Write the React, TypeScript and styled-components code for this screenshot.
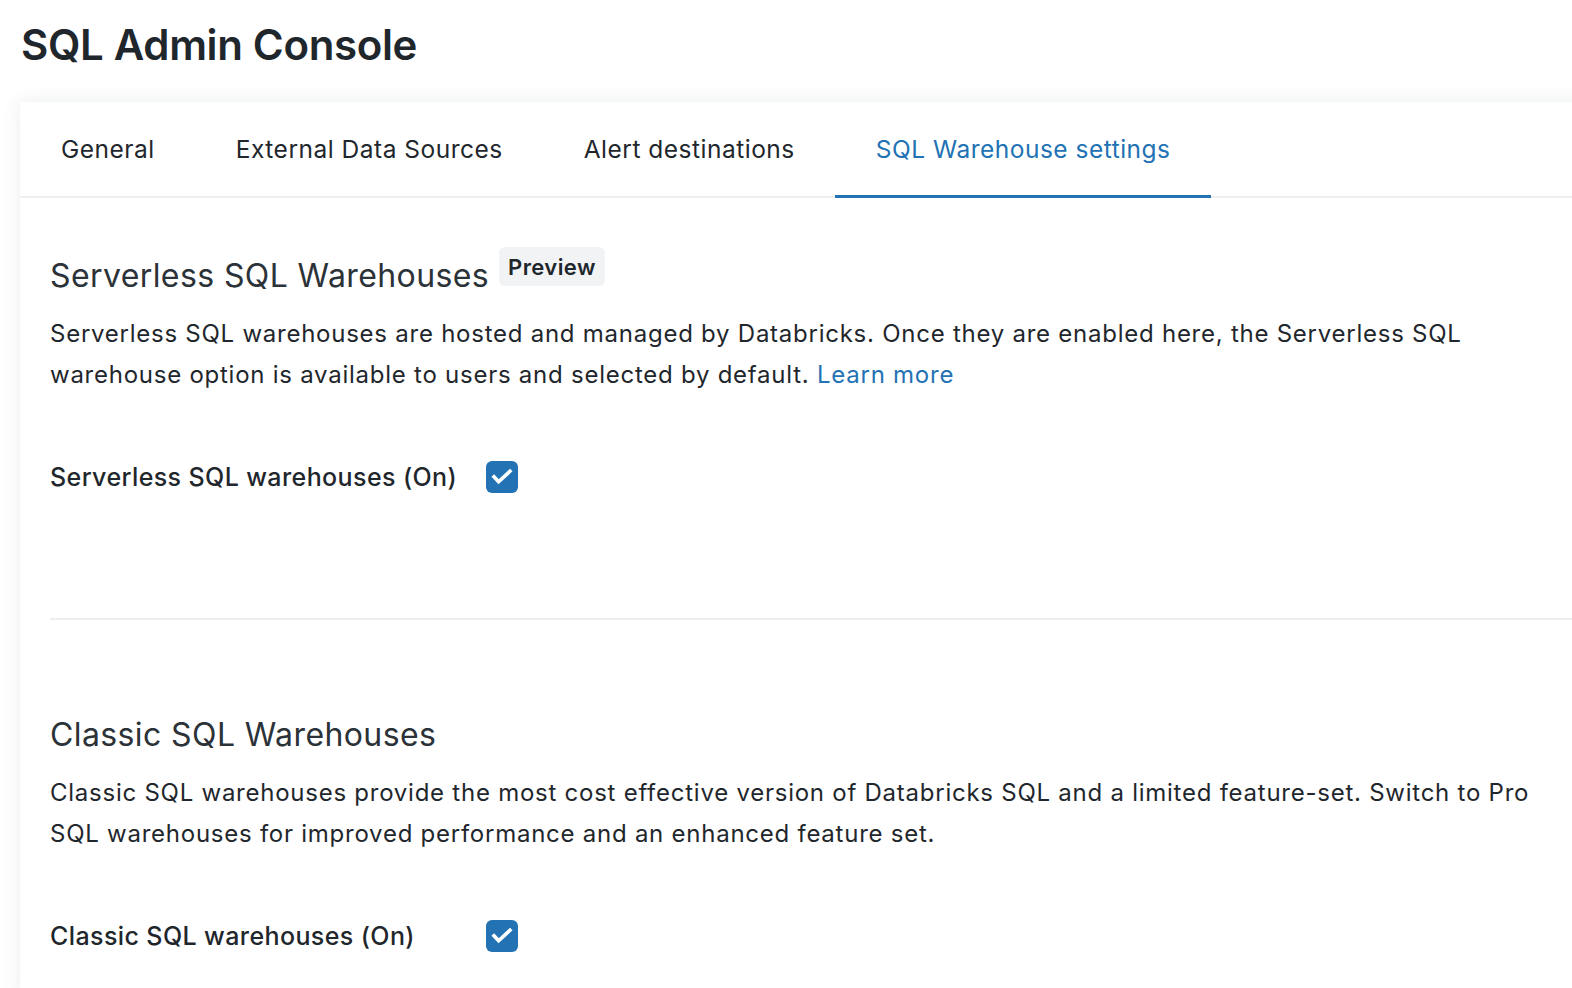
import React from "react";
import styled, { createGlobalStyle } from "styled-components";

const GlobalStyle = createGlobalStyle`
  html, body { margin: 0; padding: 0; background: #ffffff; overflow: hidden; }
  body { font-family: Inter, "Noto Sans", "Liberation Sans", sans-serif; color: #1f272d; }
  * { box-sizing: border-box; }
`;

const Page = styled.div`
  width: 1572px;
  height: 988px;
  padding: 0 0 0 20px;
  overflow: hidden;
`;

const Title = styled.h1`
  margin: 0;
  height: 102px;
  display: flex;
  align-items: center;
  padding: 0 0 14px 1px;
  font-size: 42px;
  font-weight: 600;
  letter-spacing: -0.35px;
  color: #1f272d;
`;

const Card = styled.div`
  width: 1590px;
  min-height: 900px;
  background: #ffffff;
  box-shadow: 0 0 18px rgba(30, 50, 70, 0.09);
`;

const TabBar = styled.div`
  display: flex;
  height: 96px;
  border-bottom: 2px solid #edeff1;
`;

const Tab = styled.div<{ $active?: boolean }>`
  display: flex;
  align-items: center;
  padding: 0 40px 0 41px;
  margin-bottom: -2px;
  font-size: 24.5px;
  letter-spacing: 0.5px;
  font-weight: 400;
  color: ${(p) => (p.$active ? "#2272b4" : "#1f272d")};
  border-bottom: 3px solid ${(p) => (p.$active ? "#2272b4" : "transparent")};
`;

const Section = styled.section<{ $top: number; $bottom: number }>`
  padding: ${(p) => p.$top}px 40px ${(p) => p.$bottom}px 30px;
`;

const HeadingRow = styled.div`
  display: flex;
  align-items: flex-start;
  gap: 10px;
`;

const Heading = styled.h2`
  margin: 0;
  font-size: 32px;
  line-height: 40px;
  letter-spacing: 0.4px;
  font-weight: 400;
  color: #2b3238;
`;

const Badge = styled.span`
  margin-top: -9px;
  height: 39px;
  padding: 0 9px;
  display: inline-flex;
  align-items: center;
  border-radius: 6px;
  background: #f1f3f5;
  font-size: 22px;
  letter-spacing: 0.4px;
  font-weight: 600;
  color: #1f272d;
`;

const Paragraph = styled.p`
  margin: 17px 0 0;
  font-size: 24px;
  line-height: 41px;
  letter-spacing: 0.75px;
  color: #1f272d;
  max-width: 1510px;
`;

const Link = styled.a`
  color: #2272b4;
  text-decoration: none;
`;

const ToggleRow = styled.label`
  margin-top: 66px;
  display: grid;
  grid-template-columns: 436px 32px;
  align-items: center;
  height: 32px;
  font-size: 25px;
  letter-spacing: 0.4px;
  font-weight: 500;
  color: #1f272d;
`;

const CheckBox = styled.span`
  width: 32px;
  height: 32px;
  border-radius: 6px;
  background: #2272b4;
  display: inline-flex;
  align-items: center;
  justify-content: center;
`;

const Divider = styled.hr`
  margin: 0 0 0 30px;
  border: none;
  height: 2px;
  background: #eceeef;
`;

const Check = () => (
  <CheckBox>
    <svg width="32" height="32" viewBox="0 0 32 32">
      <path
        d="M8 15.8 L12.6 20.8 L24 10.2"
        fill="none"
        stroke="#ffffff"
        strokeWidth="3.6"
        strokeLinecap="square"
      />
    </svg>
  </CheckBox>
);

export default function App() {
  return (
    <Page>
      <GlobalStyle />
      <Title>SQL Admin Console</Title>
      <Card>
        <TabBar>
          <Tab>General</Tab>
          <Tab>External Data Sources</Tab>
          <Tab>Alert destinations</Tab>
          <Tab $active>SQL Warehouse settings</Tab>
        </TabBar>
        <Section $top={58} $bottom={125}>
          <HeadingRow>
            <Heading>Serverless SQL Warehouses</Heading>
            <Badge>Preview</Badge>
          </HeadingRow>
          <Paragraph>
            Serverless SQL warehouses are hosted and managed by Databricks. Once they are enabled here, the
            Serverless SQL warehouse option is available to users and selected by default.{" "}
            <Link href="#">Learn more</Link>
          </Paragraph>
          <ToggleRow>
            <span>Serverless SQL warehouses (On)</span>
            <Check />
          </ToggleRow>
        </Section>
        <Divider />
        <Section $top={95} $bottom={40}>
          <HeadingRow>
            <Heading>Classic SQL Warehouses</Heading>
          </HeadingRow>
          <Paragraph>
            Classic SQL warehouses provide the most cost effective version of Databricks SQL and a limited
            feature-set. Switch to Pro SQL warehouses for improved performance and an enhanced feature set.
          </Paragraph>
          <ToggleRow>
            <span>Classic SQL warehouses (On)</span>
            <Check />
          </ToggleRow>
        </Section>
      </Card>
    </Page>
  );
}
